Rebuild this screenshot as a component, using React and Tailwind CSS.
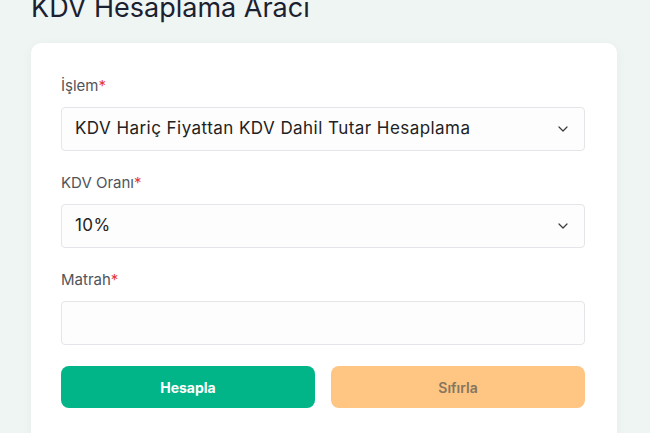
import React from "react";

function Chevron() {
  return (
    <svg width="16" height="16" viewBox="0 0 24 24" fill="none" stroke="#3a3a3a" strokeWidth="1.8" strokeLinecap="round" strokeLinejoin="round">
      <path d="M6 9l6 6 6-6" />
    </svg>
  );
}

function Label({ children }) {
  return (
    <div className="text-[15px] leading-[18px] text-[#50545b] mb-[12px]">
      {children}
      <span className="text-[#e53935]">*</span>
    </div>
  );
}

function Select({ value }) {
  return (
    <div className="h-[44px] border border-[#e3e5e8] rounded-[4px] bg-[#fdfdfd] flex items-center justify-between pl-[13px] pr-[13px] text-[17px] tracking-[0.45px] text-[#222]">
      <span>{value}</span>
      <Chevron />
    </div>
  );
}

export default function App() {
  return (
    <div className="w-[650px] h-[433px] overflow-hidden bg-[#eef5f3] pl-[31px] pr-[33px]" style={{ fontFamily: "Inter, 'Noto Sans', sans-serif" }}>
      <h1 className="text-[27px] leading-[32px] text-[#1b2130] mt-[-8px] font-normal">KDV Hesaplama Aracı</h1>
      <div className="mt-[19px] bg-white rounded-[10px] shadow-[0_2px_12px_rgba(0,0,0,0.04)] pl-[30px] pr-[32px] pt-[34px] pb-[40px]">
        <Label>İşlem</Label>
        <Select value="KDV Hariç Fiyattan KDV Dahil Tutar Hesaplama" />
        <div className="mt-[23px]"><Label>KDV Oranı</Label></div>
        <Select value="10%" />
        <div className="mt-[23px]"><Label>Matrah</Label></div>
        <div className="h-[44px] border border-[#e3e5e8] rounded-[4px] bg-[#fdfdfd]" />
        <div className="mt-[21px] grid grid-cols-2 gap-[16px]">
          <button className="h-[42px] rounded-[8px] bg-[#02b589] text-white text-[14px] font-bold">Hesapla</button>
          <button className="h-[42px] rounded-[8px] bg-[#fec682] text-[#86755f] text-[14px] font-semibold">Sıfırla</button>
        </div>
      </div>
    </div>
  );
}
